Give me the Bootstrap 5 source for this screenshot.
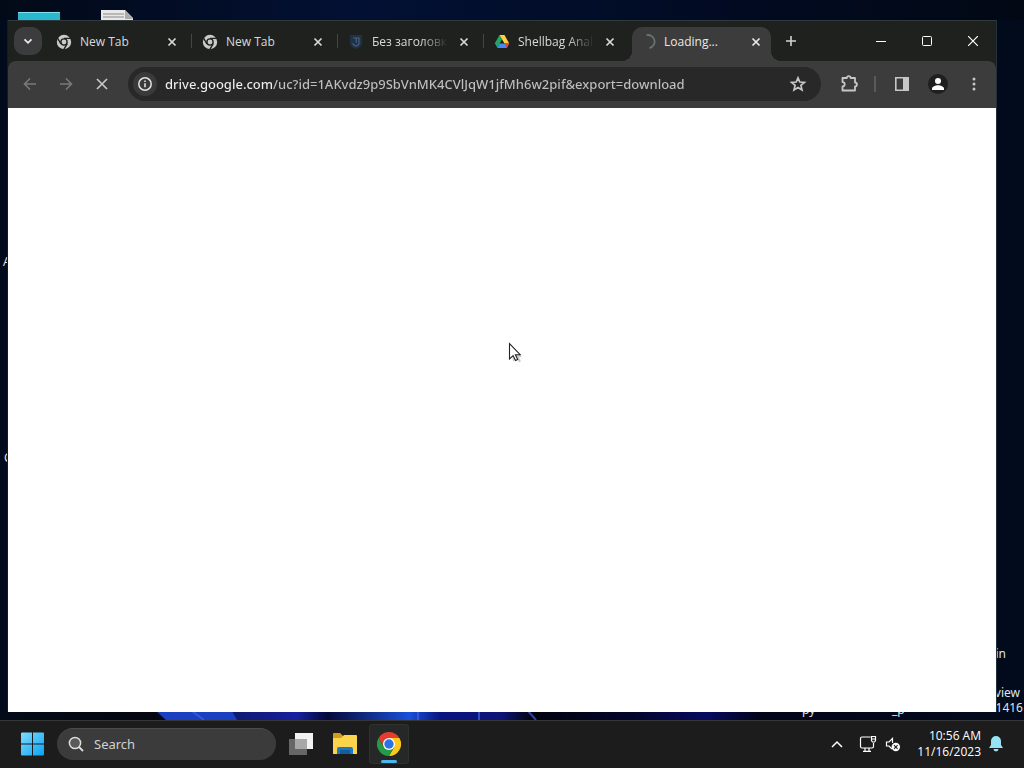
<!DOCTYPE html>
<html lang="en" data-bs-theme="dark">
<head>
<meta charset="utf-8">
<meta name="viewport" content="width=device-width, initial-scale=1">
<title>Loading...</title>
<link href="https://cdn.jsdelivr.net/npm/bootstrap@5.3.0/dist/css/bootstrap.min.css" rel="stylesheet">
<style>
  body { font-family: "Noto Sans", "Open Sans", sans-serif; font-size: 12px; line-height: 16px; color: #fff; background: #020b1b; }
  button { padding: 0; border: 0; background: none; color: inherit; }
  svg { display: block; flex: none; }
  .ib { display: flex; align-items: center; justify-content: center; flex: none; }

  /* desktop */
  .desk { padding: 20px 28px 8px 8px; min-height: 0;
    background: linear-gradient(90deg, #020a18, #021033 35%, #010a20 75%, #020814) top / 100% 20px no-repeat, #020b1b; }
  .bloom { left: 0; right: 0; bottom: 0; height: 9px; width: 100%; }
  .shortcut { position: absolute; white-space: nowrap; color: #dfe3ea; }

  /* browser window */
  .win { background: #1f211f; border-top: 1px solid #2f3a3c; box-shadow: 1px 0 #24303a, -1px 0 #101c2c; }
  .strip { height: 40px; padding-left: 6px; }
  .pick { width: 28px; height: 28px; border-radius: 10px; background: #3c3c3e; margin-right: 3px; }
  .tabx { width: 146px; height: 34px; padding: 0 11px; gap: 8px; position: relative; flex: 0 1 auto; min-width: 0; color: #d8dad8; }
  .tabx + .tabx:not(.on)::before { content: ""; position: absolute; left: 0; top: 7px; width: 1px; height: 14px; background: #454746; }
  .tabx a { flex: 1; min-width: 0; overflow: hidden; white-space: nowrap; color: inherit; text-decoration: none; font-family: "Open Sans", "Noto Sans", sans-serif; font-weight: 500; }
  .tabx a.fade-end { -webkit-mask-image: linear-gradient(90deg, #000 65%, transparent); mask-image: linear-gradient(90deg, #000 65%, transparent); }
  .tabx.on { color: #e8e8e8; }
  .plate { position: absolute; top: 0; bottom: 0; left: 3px; right: 4px; background: #3c3c3c; border-radius: 10px 10px 0 0; }
  .plate::before, .plate::after { content: ""; position: absolute; bottom: 0; width: 10px; height: 10px; }
  .plate::before { right: 100%; background: radial-gradient(circle at 0 0, transparent 10px, #3c3c3c 10px); }
  .plate::after { left: 100%; background: radial-gradient(circle at 100% 0, transparent 10px, #3c3c3c 10px); }
  .tabx > :not(.plate) { position: relative; }
  .wctl { width: 46px; height: 40px; }
  .bar { height: 47px; padding: 0 4px 2px; background: #3c3c3c; border-radius: 8px 8px 0 0; color: #c7c7c7; }
  .bar .ib { width: 36px; height: 34px; }
  .bar .ib:disabled { color: #7a7a7a; }
  .omni { height: 34px; border-radius: 17px; background: #282828; margin: 0 10px 0 8px; padding-left: 5px; min-width: 0; }
  .bar .site { width: 24px; height: 24px; border-radius: 12px; background: #3a3a3a; color: #e3e3e3; margin-right: 8px; }
  .bar .star { width: 46px; }
  .omni input { flex: 1; min-width: 0; border: 0; padding: 0; outline: 0; font-size: 13px; font-weight: 500; line-height: 20px; height: 20px; color: #d0d0d0;
    background: linear-gradient(90deg, #f0f0f0 107px, #c0c0c0 107px); -webkit-background-clip: text; background-clip: text; -webkit-text-fill-color: transparent; }
  .rule { width: 2px; height: 16px; background: #5a5a5a; margin: 0 8px 0 7px; }
  .bar .face { width: 20px; height: 20px; border-radius: 10px; background: #1f1f1f; }
  .sheet { background: #fff; position: relative; }
  .cursor { position: absolute; left: calc(50% + 6px); top: calc(50% - 68px); }

  /* taskbar */
  .task { height: 48px; background: #1c1c1c; border-top: 1px solid #343638; padding: 0 21px 2px; }
  .find { width: 219px; height: 32px; border-radius: 16px; background: #3b3b3b; border-top: 1px solid #4b4b4b; margin: 0 10px 0 12px; padding: 0 12px 0 11px; gap: 10px; }
  .find input { flex: 1; min-width: 0; border: 0; padding: 0; outline: 0; background: none; font-size: 13px; line-height: 20px; }
  .find input::placeholder { color: #d2d2d2; opacity: 1; }
  .app { width: 40px; height: 40px; margin-right: 4px; border-radius: 4px; position: relative; }
  .app.live { background: #262828; box-shadow: 0 0 0 1px #2f3130 inset; }
  .app.live::after { content: ""; position: absolute; left: 12px; right: 12px; bottom: 1px; height: 3px; border-radius: 2px; background: #4cb4ee; }
  .apps { margin-left: -5px; }
  .clock { font-family: "Open Sans", "Noto Sans", sans-serif; font-size: 12px; text-align: right; margin: 0 8px 0 16px; }
</style>
</head>
<body class="d-flex flex-column vh-100 overflow-hidden">

<svg width="0" height="0" class="position-absolute" aria-hidden="true">
  <symbol id="x" viewBox="0 0 16 16"><path d="M4.500 4.500l7 7m0-7l-7 7" stroke="currentColor" stroke-width="1.700" fill="none"/></symbol>
  <symbol id="chrome-grey" viewBox="0 0 16 16">
    <circle cx="8" cy="8" r="7.200" fill="#c9cbc9"/>
    <circle cx="8" cy="8" r="3.100" fill="#c9cbc9" stroke="#1f211f" stroke-width="1.400"/>
    <path d="M8 4.400h6.800M4.900 9.800L1.500 4M11.100 9.800L7.700 15.600" stroke="#1f211f" stroke-width="1.400"/>
  </symbol>
</svg>

<main class="desk d-flex flex-column flex-grow-1 position-relative overflow-hidden">
  <svg class="bloom position-absolute" viewBox="0 0 1024 9" preserveAspectRatio="none" aria-hidden="true">
    <defs><linearGradient id="sky"><stop offset="0" stop-color="#020b18"/><stop offset=".15" stop-color="#04060f"/><stop offset=".23" stop-color="#101a70"/><stop offset=".29" stop-color="#1420a0"/><stop offset=".32" stop-color="#050838"/><stop offset=".4" stop-color="#1a50d8"/><stop offset=".43" stop-color="#0a1480"/><stop offset=".49" stop-color="#0d1478"/><stop offset=".52" stop-color="#01030c"/><stop offset=".62" stop-color="#02052c"/><stop offset=".69" stop-color="#080a60"/><stop offset=".74" stop-color="#02041a"/><stop offset="1" stop-color="#020b1b"/></linearGradient></defs>
    <path fill="url(#sky)" d="M0 0h1024v9H0z"/>
    <path fill="#1a3fc0" d="M156 0h76l5 9h-71z"/>
    <path d="M192 0l12 9M528 0l8 9M418 0v9M479 0v9" stroke="#4060e8" stroke-width="2" opacity=".7"/>
  </svg>
  <svg class="position-absolute" style="left:18px;top:12px" width="42" height="9" aria-hidden="true"><path fill="#2ab8cf" d="M0 0h42v9H0z"/><path fill="#7de0ec" d="M0 0h42v1H0z"/></svg>
  <svg class="position-absolute" style="left:101px;top:10px" width="32" height="11" aria-hidden="true"><path fill="#e8e8e8" d="M0 0h24l8 8v3H0z"/><path d="M2 4h21M2 7h21" stroke="#888"/><path fill="#aaa" d="M24 0l8 9h-8z"/></svg>
  <span class="shortcut" style="left:3px;top:254px">A</span>
  <span class="shortcut" style="left:4px;top:450px">C</span>
  <span class="shortcut" style="right:18px;bottom:58px">in</span>
  <span class="shortcut" style="right:4px;bottom:19px">view</span>
  <span class="shortcut" style="right:1px;bottom:4px">1416</span>
  <span class="shortcut" style="left:802px;bottom:2px">py</span>
  <span class="shortcut" style="left:892px;bottom:2px">_p</span>

  <section class="win d-flex flex-column flex-grow-1 position-relative">
    <header class="strip d-flex align-items-center">
      <button class="ib pick" aria-label="Search tabs"><svg width="16" height="16" viewBox="0 0 16 16"><path d="M4.500 6.300L8 9.800l3.500-3.500" fill="none" stroke="#e8e8e8" stroke-width="1.800"/></svg></button>
      <nav class="d-flex align-self-end" style="min-width:0" aria-label="Tabs">
        <div class="tabx d-flex align-items-center pb-1"><svg width="16" height="16"><use href="#chrome-grey"/></svg><a href="#">New Tab</a><button aria-label="Close tab"><svg width="16" height="16"><use href="#x"/></svg></button></div>
        <div class="tabx d-flex align-items-center pb-1"><svg width="16" height="16"><use href="#chrome-grey"/></svg><a href="#">New Tab</a><button aria-label="Close tab"><svg width="16" height="16"><use href="#x"/></svg></button></div>
        <div class="tabx d-flex align-items-center pb-1"><svg width="16" height="16" viewBox="0 0 16 16"><path d="M2 1h12v8c0 3-3 5-6 6-3-1-6-3-6-6z" fill="#223246"/><path d="M5 4h6v5c0 1.500-1.500 2.500-3 3-1.500-.5-3-1.300-3-2.800M8.300 4v4.500" fill="none" stroke="#46607f" stroke-width="1.200"/></svg><a class="fade-end" href="#">Без заголовка</a><button aria-label="Close tab"><svg width="16" height="16"><use href="#x"/></svg></button></div>
        <div class="tabx d-flex align-items-center pb-1"><svg width="16" height="16" viewBox="0 0 16 16"><path fill="#1fa463" d="M5.500 1L.8 9.300l2.500 4.500L8 5.400z"/><path fill="#ffcf3f" d="M5.500 1h5l4.700 8.500h-4.700z"/><path fill="#4688f4" d="M5.500 9.500h9.700l-2.500 4.500H3.200z"/><path fill="#ea4335" d="M15.200 9.500L13 13.500l-2.500-4z"/></svg><a class="fade-end" href="#">Shellbag Analysis</a><button aria-label="Close tab"><svg width="16" height="16"><use href="#x"/></svg></button></div>
        <div class="tabx on d-flex align-items-center pb-1"><span class="plate"></span><svg width="16" height="16" viewBox="0 0 16 16"><path d="M6.500 1.200A6.500 6.500 0 0 1 9.500 14" fill="none" stroke="#6b7073" stroke-width="1.800"/></svg><a href="#">Loading...</a><button aria-label="Close tab"><svg width="16" height="16"><use href="#x"/></svg></button></div>
      </nav>
      <button class="ib" style="width:32px;height:28px" aria-label="New tab"><svg width="12" height="12" viewBox="0 0 12 12"><path d="M6 1v10M1 6h10" stroke="#d0d2d0" stroke-width="1.600"/></svg></button>
      <div class="d-flex ms-auto">
        <button class="ib wctl" aria-label="Minimize"><svg width="10" height="10"><path d="M0 5.500h10" stroke="#fff"/></svg></button>
        <button class="ib wctl" aria-label="Maximize"><svg width="10" height="10"><rect x=".5" y=".5" width="9" height="9" rx="1" fill="none" stroke="#fff"/></svg></button>
        <button class="ib wctl" aria-label="Close"><svg width="10" height="10"><path d="M0 0l10 10M10 0L0 10" stroke="#fff" stroke-width="1.200"/></svg></button>
      </div>
    </header>

    <div class="bar d-flex align-items-center">
      <button class="ib" disabled aria-label="Back"><svg width="16" height="16" viewBox="0 0 16 16"><path d="M14 8H3M8 2.500L2.500 8 8 13.500" fill="none" stroke="currentColor" stroke-width="1.600"/></svg></button>
      <button class="ib" disabled aria-label="Forward"><svg width="16" height="16" viewBox="0 0 16 16"><path d="M2 8h11M8 2.500L13.500 8 8 13.500" fill="none" stroke="currentColor" stroke-width="1.600"/></svg></button>
      <button class="ib" aria-label="Stop"><svg width="16" height="16" viewBox="0 0 16 16"><path d="M3 3l10 10M13 3L3 13" stroke="currentColor" stroke-width="1.700"/></svg></button>
      <div class="omni d-flex align-items-center flex-grow-1">
        <button class="ib site" aria-label="View site information"><svg width="16" height="16" viewBox="0 0 16 16"><circle cx="8" cy="8" r="6.200" fill="none" stroke="currentColor" stroke-width="1.500"/><path d="M8 7.200v4M8 4.500v1.600" stroke="currentColor" stroke-width="1.600"/></svg></button>
        <input type="text" spellcheck="false" aria-label="Address and search bar" value="drive.google.com/uc?id=1AKvdz9p9SbVnMK4CVlJqW1jfMh6w2pif&amp;export=download">
        <button class="ib star" aria-label="Bookmark this tab"><svg width="18" height="18" viewBox="0 0 18 18"><path d="M9 2.800l1.800 4.200 4.600.4-3.500 3 1.100 4.500L9 12.500l-4 2.400 1.100-4.500-3.500-3 4.600-.4z" fill="none" stroke="currentColor" stroke-width="1.700"/></svg></button>
      </div>
      <button class="ib" aria-label="Extensions"><svg width="20" height="20" viewBox="0 0 20 20"><path d="M3.500 4h4.300a1.900 1.900 0 0 1 3.800 0H16v4.500a1.900 1.900 0 0 1 0 3.800V16.500H3.500v-4a2.200 2.200 0 0 0 0-4.400z" fill="none" stroke="currentColor" stroke-width="1.800" stroke-linejoin="round"/></svg></button>
      <span class="rule"></span>
      <button class="ib" aria-label="Side panel"><svg width="16" height="16" viewBox="0 0 16 16"><path d="M1.800 1.800h12.400v12.400H1.800z" fill="none" stroke="currentColor" stroke-width="1.600"/><path fill="currentColor" d="M9 1.500h5.500v13H9z"/></svg></button>
      <button class="ib" aria-label="Profile"><span class="ib face"><svg width="14" height="14" viewBox="0 0 14 14" fill="#fff"><circle cx="7" cy="4" r="3"/><path d="M1 13v-1.500C1 9.500 4.500 8.200 7 8.200s6 1.300 6 3.300V13z"/></svg></span></button>
      <button class="ib" aria-label="Menu"><svg width="4" height="16" fill="currentColor"><circle cx="2" cy="3" r="1.500"/><circle cx="2" cy="8" r="1.500"/><circle cx="2" cy="13" r="1.500"/></svg></button>
    </div>

    <div class="sheet flex-grow-1">
      <svg class="cursor" width="16" height="22" viewBox="0 0 16 22" aria-hidden="true"><path d="M3 4l11 11-3 .5 2 4-2 1-2-4-4 3z" fill="#000" opacity=".2"/><path d="M1.500 1.500v15.500l3.600-3.400 2.400 5 2.200-1-2.300-4.900h4.800z" fill="#fff" stroke="#222" stroke-width="1.100"/></svg>
    </div>
  </section>
</main>

<footer class="task d-flex align-items-center flex-shrink-0">
  <button aria-label="Start"><svg width="24" height="24" viewBox="0 0 24 24"><defs><linearGradient id="w" x2="1" y2="1"><stop stop-color="#7fdcff"/><stop offset="1" stop-color="#0aa2f2"/></linearGradient></defs><path fill="url(#w)" d="M0 1.500Q0 .5 1 .5h10v11H0zM12 .5h10q1 0 1 1v10H12zM0 12.500h11v11H1q-1 0-1-1zM12 12.500h11v10q0 1-1 1H12z"/></svg></button>
  <label class="find d-flex align-items-center"><svg width="16" height="16" viewBox="0 0 16 16"><circle cx="7" cy="7" r="5.600" fill="#5a5a5a" stroke="#dedede" stroke-width="1.500"/><path d="M11 11l4 4" stroke="#dedede" stroke-width="1.800"/></svg><input type="text" placeholder="Search" aria-label="Search"></label>
  <div class="apps d-flex">
    <button class="ib app" aria-label="Task view"><svg width="24" height="22" viewBox="0 0 24 22"><path fill="#f2f2f2" d="M6 0h18v16H6z"/><path fill="#666" d="M0 6h18v16H0z"/><path fill="#a8a8a8" d="M6 6h12v10H6z"/></svg></button>
    <button class="ib app" aria-label="File Explorer"><svg width="24" height="22" viewBox="0 0 24 22"><path fill="#d59a1c" d="M0 1q0-1 1-1h6l3 3v4H0z"/><path fill="#fbd44e" d="M0 5h8l3-3h12q1 0 1 1v18H0z"/><path fill="#1c78c0" d="M4 21v-5q0-2 2-2h12q2 0 2 2v5z"/><path fill="#155c98" d="M7 17h10v4H7z"/></svg></button>
    <button class="ib app live" aria-label="Google Chrome"><svg width="24" height="24" viewBox="0 0 24 24"><path fill="#e53b30" d="M1.600 6A12 12 0 0 1 22.400 6H12z"/><path fill="#e53b30" d="M1.600 6L7 15l5-9z"/><path fill="#fdc91c" d="M22.400 6A12 12 0 0 1 12 24l5.200-9L12 6z"/><path fill="#259b47" d="M1.600 6A12 12 0 0 0 12 24l5.200-9H6.800z"/><circle cx="12" cy="12" r="6" fill="#fff"/><circle cx="12" cy="12" r="4.700" fill="#2b72e6"/></svg></button>
  </div>
  <div class="d-flex align-items-center ms-auto">
    <button class="ib me-3" aria-label="Show hidden icons"><svg width="12" height="12" viewBox="0 0 12 12"><path d="M1 9l5-5 5 5" fill="none" stroke="#fff" stroke-width="1.500"/></svg></button>
    <button class="d-flex align-items-center gap-2" aria-label="Network and volume">
      <svg width="18" height="18" viewBox="0 0 18 18" fill="none" stroke="#fff" stroke-width="1.200"><path d="M11.500 2H3Q1.500 2 1.500 3.500v8Q1.500 13 3 13h10q1.500 0 1.500-1.500V8M6 13v3m4-3v3M4 16.300h8M12.500 1.500h4v4l-1 1.500h-2l-1-1.500zM12.500 4h4"/></svg>
      <svg width="16" height="16" viewBox="0 0 16 16"><path d="M7 13L4 10H1.500V6H4l3.500-3.500V7" fill="none" stroke="#fff" stroke-width="1.200"/><circle cx="10.800" cy="11" r="4.200" fill="#fff"/><path d="M9 9.200l3.600 3.600m0-3.600L9 12.800" stroke="#1c1c1c" stroke-width="1.100"/></svg>
    </button>
    <time class="clock" datetime="2023-11-16T10:56">10:56 AM<br>11/16/2023</time>
    <button aria-label="Notifications"><svg width="14" height="16" viewBox="0 0 14 16" fill="#98e2f5"><path d="M7 0a5 5 0 0 1 5 5v4l2 3H0l2-3V5a5 5 0 0 1 5-5zM4.500 13h5a2.500 2.500 0 0 1-5 0z"/></svg></button>
  </div>
</footer>

<script src="https://cdn.jsdelivr.net/npm/bootstrap@5.3.0/dist/js/bootstrap.bundle.min.js"></script>
</body>
</html>
